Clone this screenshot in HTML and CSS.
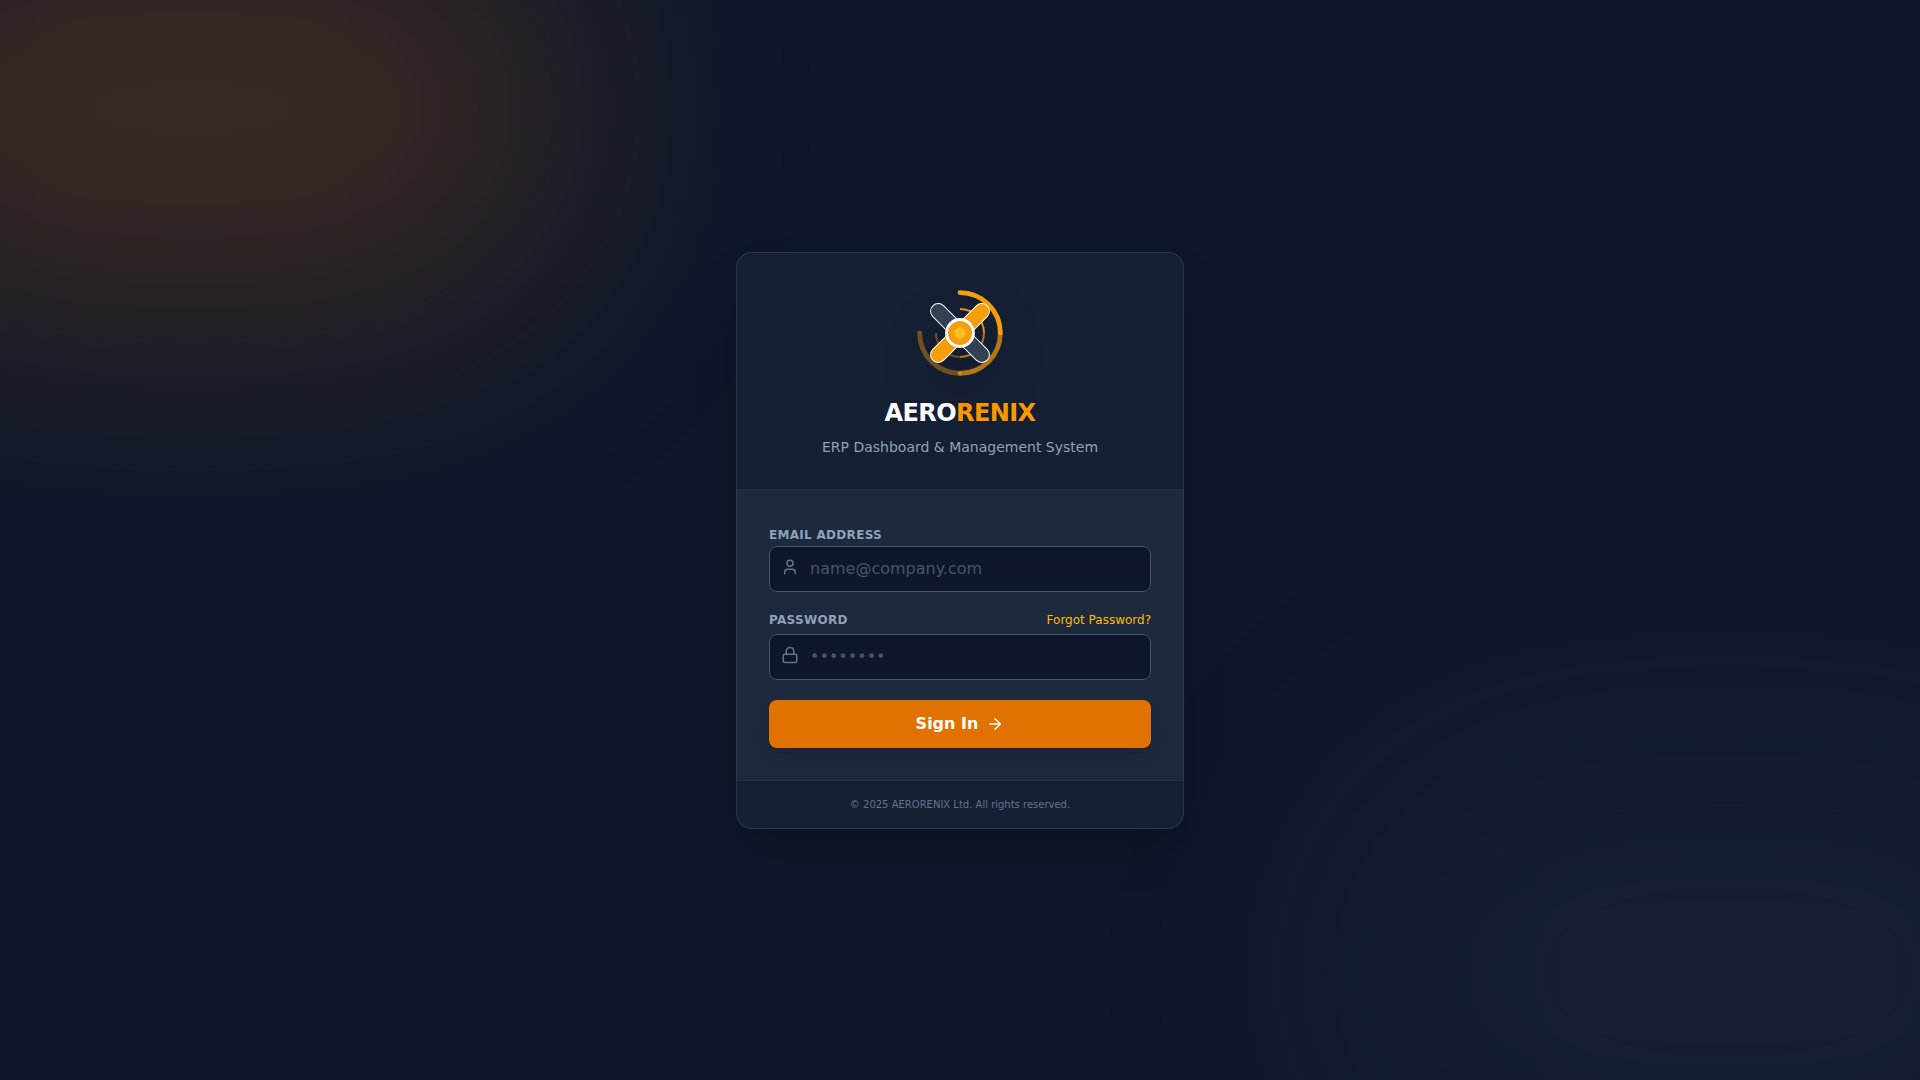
FILE: index.html
```html
<!DOCTYPE html>
<html lang="en">
<head>
    <meta charset="UTF-8">
    <meta name="viewport" content="width=device-width, initial-scale=1.0">
    <title>AERORENIX - Sign In</title>
    <link rel="stylesheet" href="styles.css">
</head>
<body>
    <!-- Background glows -->
    <div class="background">
        <div class="glow glow-top"></div>
        <div class="glow glow-bottom"></div>
    </div>

    <main class="card">
        <div class="card-header">
            <svg class="logo" viewBox="0 0 100 100" fill="none" aria-hidden="true">
                <g stroke="#f59e0b" stroke-width="5" stroke-linecap="round">
                    <path d="M50 8A42 42 0 0 1 92 50"/>
                    <path d="M92 50A42 42 0 0 1 50 92" opacity="0.7"/>
                    <path d="M50 92A42 42 0 0 1 8 50" opacity="0.4"/>
                </g>
                <g stroke="#f59e0b" stroke-width="2">
                    <path d="M50 25A25 25 0 0 1 75 50" opacity="0.9"/>
                    <path d="M75 50A25 25 0 0 1 50 75" opacity="0.7"/>
                    <path d="M50 75A25 25 0 0 1 25 50" opacity="0.4"/>
                </g>
                <g stroke="#ffffff" stroke-width="1">
                    <rect x="42" y="10" width="16" height="40" rx="8" fill="#f59e0b" transform="rotate(45 50 50)"/>
                    <rect x="42" y="10" width="16" height="40" rx="8" fill="#334155" transform="rotate(135 50 50)"/>
                    <rect x="42" y="10" width="16" height="40" rx="8" fill="#f59e0b" transform="rotate(225 50 50)"/>
                    <rect x="42" y="10" width="16" height="40" rx="8" fill="#334155" transform="rotate(315 50 50)"/>
                </g>
                <circle cx="50" cy="50" r="14" fill="#f59e0b" stroke="#ffffff" stroke-width="3"/>
                <circle cx="50" cy="50" r="6" fill="#fbbf24"/>
            </svg>
            <h1>AERO<span>RENIX</span></h1>
            <p>ERP Dashboard &amp; Management System</p>
        </div>

        <form class="login-form">
            <div class="field">
                <label for="email">Email Address</label>
                <div class="input-box">
                    <svg class="icon" viewBox="0 0 24 24" aria-hidden="true">
                        <path d="M19 21v-2a4 4 0 0 0-4-4H9a4 4 0 0 0-4 4v2"/>
                        <circle cx="12" cy="7" r="4"/>
                    </svg>
                    <input type="email" id="email" placeholder="name@company.com" required>
                </div>
            </div>

            <div class="field">
                <div class="label-row">
                    <label for="password">Password</label>
                    <a href="#">Forgot Password?</a>
                </div>
                <div class="input-box">
                    <svg class="icon" viewBox="0 0 24 24" aria-hidden="true">
                        <rect x="3" y="11" width="18" height="11" rx="2"/>
                        <path d="M7 11V7a5 5 0 0 1 10 0v4"/>
                    </svg>
                    <input type="password" id="password" placeholder="••••••••" required>
                </div>
            </div>

            <button type="submit">
                Sign In
                <svg class="icon" viewBox="0 0 24 24" aria-hidden="true">
                    <path d="M5 12h14"/>
                    <path d="m12 5 7 7-7 7"/>
                </svg>
            </button>
        </form>

        <div class="card-footer">
            <p>© 2025 AERORENIX Ltd. All rights reserved.</p>
        </div>
    </main>
</body>
</html>
```
FILE: styles.css
```css
* {
    box-sizing: border-box;
    margin: 0;
    padding: 0;
}
body {
    position: relative;
    display: flex;
    align-items: center;
    justify-content: center;
    min-height: 100vh;
    padding: 16px;
    background: #0f172b;
    color: #ffffff;
    font-family: "DejaVu Sans", sans-serif;
    font-size: 16px;
    line-height: 24px;
}
.background {
    position: absolute;
    inset: 0;
    overflow: hidden;
}
.glow {
    position: absolute;
    width: 40%;
    height: 40%;
    border-radius: 9999px;
    filter: blur(120px);
}
.glow-top {
    top: -10%;
    left: -10%;
    background: rgba(225, 113, 0, 0.2);
}
.glow-bottom {
    right: -10%;
    bottom: -10%;
    background: rgba(49, 65, 88, 0.2);
}
.card {
    position: relative;
    width: 100%;
    max-width: 448px;
    overflow: hidden;
    background: #1d293d;
    border: 1px solid rgba(49, 65, 88, 0.6);
    border-radius: 16px;
    box-shadow: 0 25px 50px -12px rgba(0, 0, 0, 0.25);
}
.card-header {
    padding: 32px;
    text-align: center;
    background: rgba(15, 23, 43, 0.5);
    border-bottom: 1px solid rgba(49, 65, 88, 0.5);
}
.logo {
    display: block;
    width: 96px;
    height: 96px;
    margin: 0 auto 16px;
    filter: drop-shadow(0 25px 25px rgba(0, 0, 0, 0.15));
}
h1 {
    font-size: 24px;
    line-height: 32px;
    letter-spacing: -0.025em;
}
h1 span {
    color: #fe9a00;
}
.card-header p {
    margin-top: 8px;
    color: #90a1b9;
    font-size: 14px;
    line-height: 20px;
}
.login-form {
    display: flex;
    flex-direction: column;
    gap: 20px;
    padding: 32px;
}
label {
    color: #90a1b9;
    font-size: 12px;
    font-weight: bold;
    line-height: 16px;
    letter-spacing: 0.025em;
    text-transform: uppercase;
}
.label-row {
    display: flex;
    align-items: center;
    justify-content: space-between;
    margin-bottom: 6px;
    line-height: 16px;
}
.label-row a {
    color: #ffb900;
    font-size: 12px;
    text-decoration: none;
}
.input-box {
    position: relative;
}
.icon {
    width: 18px;
    height: 18px;
    fill: none;
    stroke: currentColor;
    stroke-width: 2;
    stroke-linecap: round;
    stroke-linejoin: round;
}
.input-box .icon {
    position: absolute;
    top: 12px;
    left: 12px;
    color: #62748e;
}
input {
    display: block;
    width: 100%;
    padding: 10px 16px 10px 40px;
    background: #0f172b;
    border: 1px solid #45556c;
    border-radius: 8px;
    color: #ffffff;
    font: inherit;
}
input::placeholder {
    color: #45556c;
}
input:focus {
    border-color: #fe9a00;
    outline: none;
}
button {
    display: flex;
    align-items: center;
    justify-content: center;
    gap: 8px;
    width: 100%;
    padding: 12px;
    background: #e17100;
    border: none;
    border-radius: 8px;
    box-shadow: 0 10px 15px -3px rgba(0, 0, 0, 0.1), 0 4px 6px -4px rgba(0, 0, 0, 0.1);
    color: #ffffff;
    font: inherit;
    font-weight: bold;
    cursor: pointer;
}
button:hover {
    background: #fe9a00;
}
.card-footer {
    padding: 16px;
    text-align: center;
    background: rgba(15, 23, 43, 0.5);
    border-top: 1px solid rgba(49, 65, 88, 0.5);
}
.card-footer p {
    color: #62748e;
    font-size: 10px;
    line-height: 15px;
}
```
